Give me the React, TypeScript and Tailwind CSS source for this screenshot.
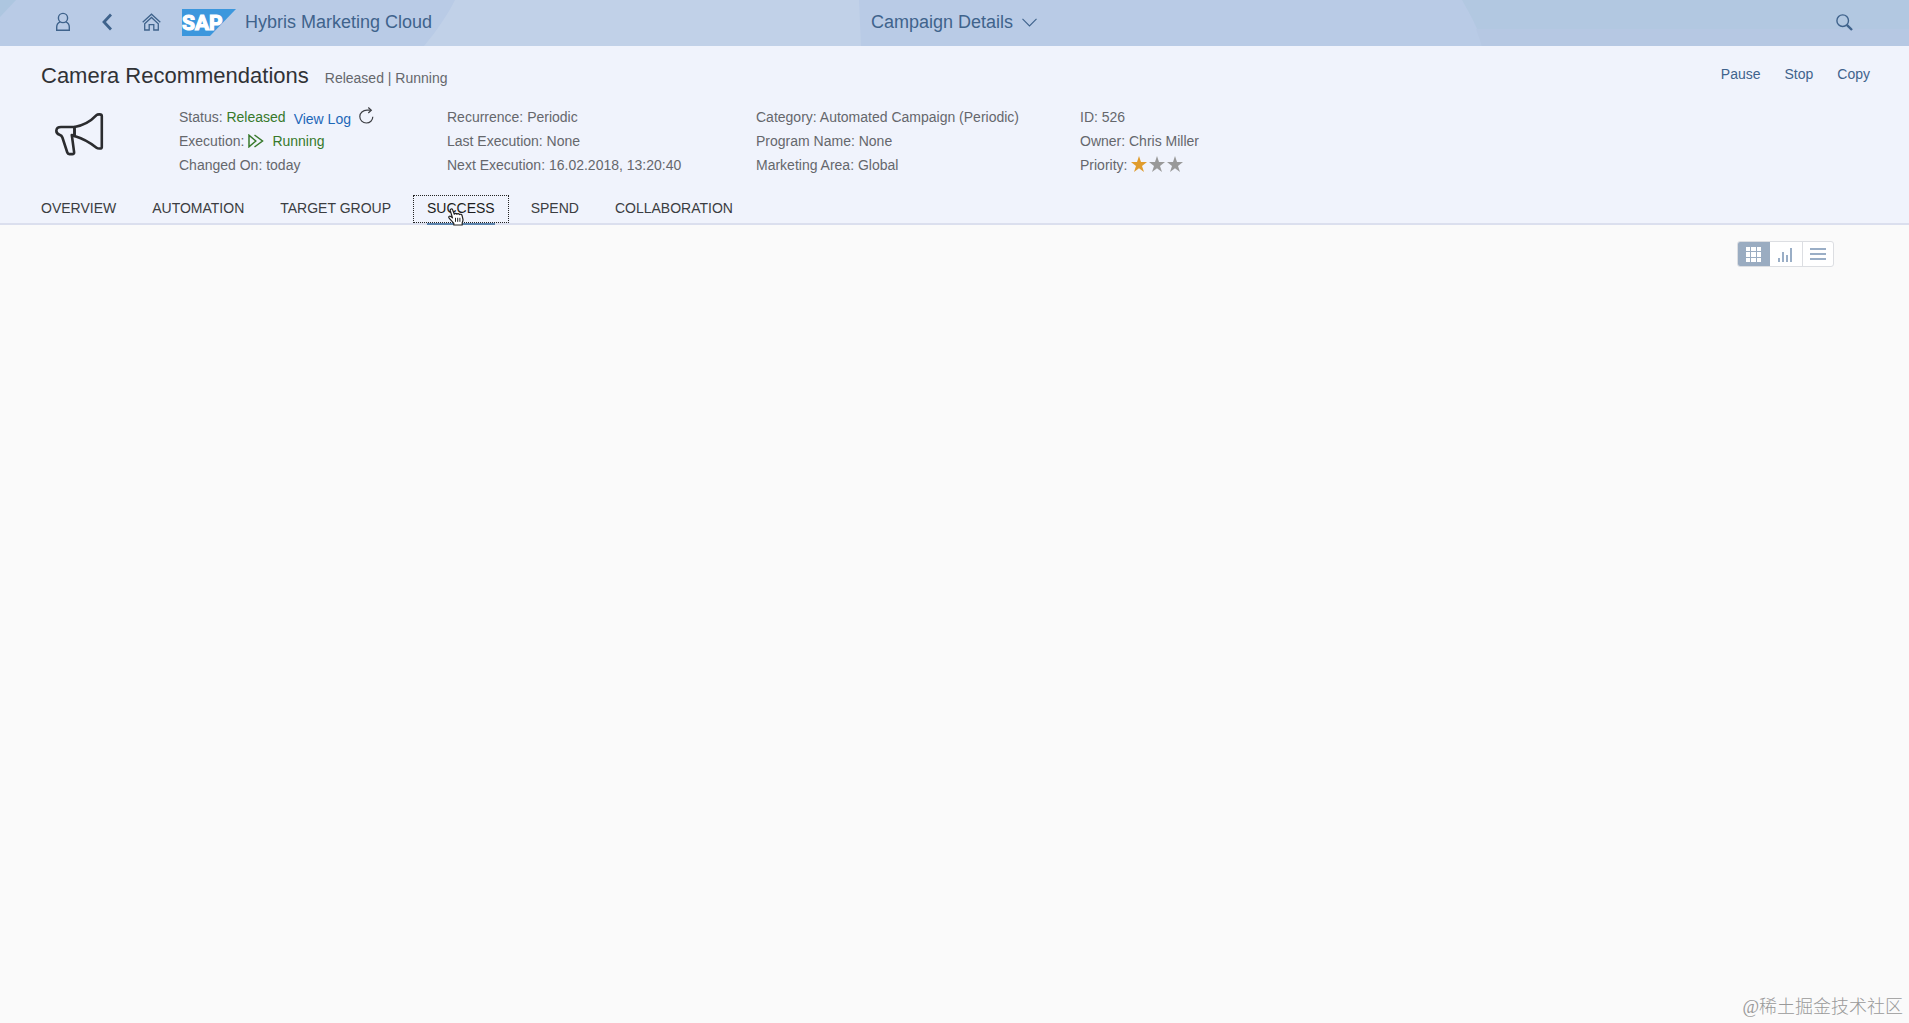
const facts = [
  ["Recurrence: Periodic", "Last Execution: None", "Next Execution: 16.02.2018, 13:20:40"],
  ["Category: Automated Campaign (Periodic)", "Program Name: None", "Marketing Area: Global"],
];

const tabs = ["OVERVIEW", "AUTOMATION", "TARGET GROUP", "SUCCESS", "SPEND", "COLLABORATION"];

const actions = ["Pause", "Stop", "Copy"];

const STAR = "M8 0l2 6h6l-5 4 2 6-5-3.800L3 16l2-6-5-4h6z";

function ShellBar() {
  return (
    <header className="relative h-[46px] bg-[#b9cbe6] text-[#3f638c]">
      <svg className="absolute inset-0 size-full" viewBox="0 0 1909 46" preserveAspectRatio="none" aria-hidden="true">
        <path d="M0 0h16L0 17z" fill="#adc6e0" />
        <path d="M455 0h404l2 46H424c12-14 24-32 31-46z" fill="#c1d1e8" />
        <path d="M1462 0h447v46h-427c-2-15-12-32-20-46z" fill="#b2c8e1" />
        <path d="M1476 29h433v17h-427z" fill="#b6c8e3" />
      </svg>
      <div className="relative flex h-[44px] items-center">
        <div className="flex flex-1 items-center pl-[55px]">
          <button type="button" aria-label="User" className="mr-[31px]">
            <svg width="16" height="20" viewBox="0 0 16 20" fill="none" stroke="currentColor" strokeWidth="1.4">
              <circle cx="8" cy="6" r="4.600" />
              <path d="M5.200 9.800C2.500 11 1.700 12.800 1.700 15v3.300h12.600V15c0-2.200-.8-4-3.500-5.200" />
            </svg>
          </button>
          <button type="button" aria-label="Back" className="mr-[30px]">
            <svg width="10" height="18" viewBox="0 0 10 18" fill="none" stroke="currentColor" strokeWidth="2.800">
              <path d="M9 1.500L2 9l7 7.500" />
            </svg>
          </button>
          <button type="button" aria-label="Home" className="mr-[21px]">
            <svg width="19" height="18" viewBox="0 0 19 18" fill="none" stroke="currentColor" strokeWidth="1.300">
              <path d="M.7 9.300L9.500 1.200l8.800 8.100" />
              <path d="M2.700 10.800l6.800-6.300 6.800 6.300v6.200h-4.500v-5.300H7.200V17H2.700z" />
            </svg>
          </button>
          <svg width="54" height="27" viewBox="0 0 54 27" role="img" aria-label="SAP" className="mr-[9px]">
            <path d="M0 0h54L28 27H0z" fill="#3c97dd" />
            <text
              x="0"
              y="21"
              fill="#fff"
              stroke="#fff"
              strokeWidth="1.200"
              className="font-[Roboto,'Liberation_Sans',sans-serif] text-[21px] font-bold"
            >
              SAP
            </text>
          </svg>
          <span className="text-lg leading-6">Hybris Marketing Cloud</span>
        </div>
        <button type="button" className="flex items-center gap-[9px] text-lg leading-6">
          Campaign Details
          <svg width="15" height="9" viewBox="0 0 15 9" fill="none" stroke="currentColor" strokeWidth="1.100">
            <path d="M.5.8L7.500 8l7-7.200" />
          </svg>
        </button>
        <div className="flex flex-1 justify-end pr-[56px]">
          <button type="button" aria-label="Search">
            <svg width="17" height="17" viewBox="0 0 17 17" fill="none" stroke="currentColor">
              <circle cx="6.700" cy="6.700" r="5.800" strokeWidth="1.400" />
              <path d="M10.800 10.800l5.200 5.200" strokeWidth="2.400" />
            </svg>
          </button>
        </div>
      </div>
    </header>
  );
}

function Cursor() {
  return (
    <svg
      className="pointer-events-none absolute top-[13px] left-[35px]"
      width="16"
      height="18"
      viewBox="0 0 16 18"
      fill="#fff"
      stroke="#222"
      strokeWidth="1.200"
      strokeLinejoin="round"
      aria-hidden="true"
    >
      <path d="M5.800 17v-1.600C4.600 13.600 2.600 12 1 9.900.2 8.600 1.600 7.600 2.800 8.500l1.700 1.400L2.300 2.700C1.900 1 3.900.2 4.600 1.800l1.700 4.400c.4-1.200 2.200-1.200 2.600 0 .7-1 2.200-.7 2.500.4 1-.7 2.400-.2 2.700 1l.9 3.900c.2 1.400-.6 2.400-.8 3.500V17z" />
      <path d="M7.500 9.800v4M9.700 9.800v4M11.900 9.800v4" strokeWidth="1" />
    </svg>
  );
}

function ObjectHeader() {
  return (
    <section className="border-b-2 border-[#dbdfee] bg-[#f0f3fc]">
      <div className="flex items-start justify-between pt-[14px] pr-[39px] pl-[41px]">
        <div className="flex items-baseline gap-4">
          <h1 className="text-[22px] leading-8 text-[#303236]">Camera Recommendations</h1>
          <p>Released | Running</p>
        </div>
        <div className="flex gap-6 pt-[2px] text-[#3f638c]">
          {actions.map((action) => (
            <button key={action} type="button">
              {action}
            </button>
          ))}
        </div>
      </div>

      <div className="flex pt-[13px] pl-[55px]">
        <div className="w-[124px] shrink-0 pt-[8px]">
          <svg width="49" height="43" viewBox="0 0 49 43" fill="none" stroke="#2b2c2f" strokeWidth="2.600" strokeLinejoin="round">
            <path d="M19.500 14C29 12.500 36.500 7.500 41.500 2.200c1.200-1.200 5.300-1.200 5.300.7v31.300c0 1.700-3.900 1.700-5.300.5C35.500 30 28 25.500 19.500 23z" />
            <path d="M19.500 14H6c-5.800 0-6 6.200-1.500 7.800 1.500.5 2.300.9 2.900 2.700l4.900 15c.4 1.300.8 1.600 2.100 1.600h2.800c1.500 0 2-.5 1.900-2L16.800 22l2.700 1z" />
          </svg>
        </div>
        <div className="w-[268px] shrink-0">
          <p className="flex">
            Status:&nbsp;<span className="text-[#37792b]">Released</span>
            <a href="#log" className="mt-[2px] -mb-[2px] ml-[8px] text-[#1d67b8]">
              View Log
            </a>
            <button type="button" aria-label="Refresh" className="ml-[8px] flex pt-[2px]">
              <svg width="15" height="17" viewBox="0 0 15 17" fill="none" stroke="#3d3f44" strokeWidth="1.200">
                <path d="M11.500 3.200H8C4 3.200.8 5.900.8 9.500c0 3.500 2.900 6.500 6.500 6.500 3.700 0 6.500-2.700 6.500-6.300" />
                <path d="M9.300.5l3 2.700-3 2.800" />
              </svg>
            </button>
          </p>
          <p className="flex items-center">
            Execution:
            <svg className="mx-1" width="16" height="14" viewBox="0 0 16 14" fill="none" stroke="#37792b" strokeWidth="1.500">
              <path d="M1 1.200v11.600L7.800 7zM6.500 1L14.500 7l-8 6" />
            </svg>
            <span className="ml-1 text-[#37792b]">Running</span>
          </p>
          <p>Changed On: today</p>
        </div>
        <div className="w-[309px] shrink-0">
          {facts[0].map((fact) => (
            <p key={fact}>{fact}</p>
          ))}
        </div>
        <div className="w-[324px] shrink-0">
          {facts[1].map((fact) => (
            <p key={fact}>{fact}</p>
          ))}
        </div>
        <div>
          <p>ID: 526</p>
          <p>Owner: Chris Miller</p>
          <p className="flex items-center">
            Priority:&nbsp;
            <svg width="52" height="16" viewBox="0 0 52 16" role="img" aria-label="1 of 3" className="mb-[2px]">
              <path d={STAR} fill="#e09c2d" />
              <path d={STAR} transform="translate(18)" fill="#999" />
              <path d={STAR} transform="translate(36)" fill="#999" />
            </svg>
          </p>
        </div>
      </div>

      <nav className="-mb-[2px] flex gap-2 pt-[18px] pl-[27px] text-[#3b3d41]">
        {tabs.map((tab) => {
          const active = tab === "SUCCESS";
          return (
            <button
              key={tab}
              type="button"
              className={
                active
                  ? "relative flex h-[30px] flex-col px-[14px] text-[#1c1d20]"
                  : "flex h-[30px] flex-col px-[14px]"
              }
            >
              <span className={active ? "box-content h-7 border-b-2 border-[#5b83ad] leading-[27px]" : "leading-[27px]"}>
                {tab}
              </span>
              {active && <span className="absolute inset-x-0 top-0 h-7 border border-dotted border-[#222]" />}
              {active && <Cursor />}
            </button>
          );
        })}
      </nav>
    </section>
  );
}

function ViewSwitch() {
  return (
    <div className="flex justify-end pt-4 pr-[75px]">
      <div className="flex h-[26px] overflow-hidden rounded-[3px] border border-[#dcdee2] bg-white text-[#9aaec6]">
        <button type="button" aria-label="Tiles" className="-m-px flex w-[33px] items-center justify-center bg-[#9aacc1]">
          <svg width="15" height="15" viewBox="0 0 15 15" fill="#fff">
            <path d="M0 0h4v4H0zM5 0h5v4H5zM11 0h4v4h-4zM0 5h4v5H0zM5 5h5v5H5zM11 5h4v5h-4zM0 11h4v4H0zM5 11h5v4H5zM11 11h4v4h-4z" />
          </svg>
        </button>
        <button type="button" aria-label="Chart" className="flex w-[33px] items-center justify-center">
          <svg width="15" height="15" viewBox="0 0 15 15" fill="currentColor">
            <path d="M0 11h2v4H0zM4 5h2v10H4zM8 8h2v7H8zM12 1h2v14h-2z" />
          </svg>
        </button>
        <button type="button" aria-label="List" className="flex w-[31px] items-center justify-center border-l border-[#dcdee2]">
          <svg width="16" height="12" viewBox="0 0 16 12" fill="currentColor">
            <path d="M0 0h16v2H0zM0 5h16v2H0zM0 10h16v2H0z" />
          </svg>
        </button>
      </div>
    </div>
  );
}

export default function App() {
  return (
    <div className="relative min-h-screen bg-[#fafafa] font-['Liberation_Sans',Arial,sans-serif] text-sm leading-6 text-[#65676c]">
      <ShellBar />
      <ObjectHeader />
      <main>
        <ViewSwitch />
      </main>
      <p className="absolute right-[6px] bottom-[4px] font-['Liberation_Serif','Noto_Sans_CJK_SC',serif] text-lg leading-6 font-light text-[#999]">
        @稀土掘金技术社区
      </p>
    </div>
  );
}
